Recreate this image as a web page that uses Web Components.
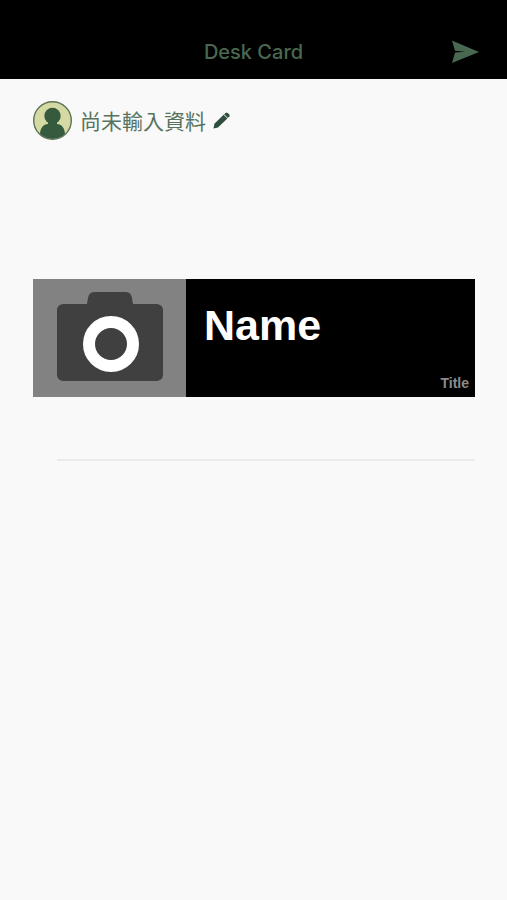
<!DOCTYPE html>
<html lang="zh-Hant">
<head>
  <meta charset="utf-8">
  <meta name="viewport" content="width=device-width, initial-scale=1">
  <title>Desk Card</title>
  <style>
    body {
      margin: 0;
      min-height: 100vh;
      background: #f9f9f9;
      font-family: Inter, "Noto Sans CJK TC", sans-serif;
      color: #56735f;
    }

    main {
      padding: 21px 32px 32px 33px;
    }

    desk-card {
      margin-top: 139px;
    }

    list-divider {
      margin: 62px 0 0 24px;
    }
  </style>
</head>
<body>
  <nav-bar>
    Desk Card
    <send-button slot="action"></send-button>
  </nav-bar>
  <main>
    <user-profile>尚未輸入資料</user-profile>
    <desk-card>
      <span slot="name">Name</span>
      <span slot="title">Title</span>
    </desk-card>
    <list-divider></list-divider>
  </main>

  <script>
    class NavBar extends HTMLElement {
      constructor() {
        super();
        this.shadowDOM = this.attachShadow({ mode: "open" });
      }

      connectedCallback() {
        this.shadowDOM.innerHTML = `
          <style>
            :host {
              display: block;
              background: #000;
              color: #486850;
            }

            header {
              display: grid;
              grid-template-columns: 1fr auto 1fr;
              align-items: center;
              height: 54px;
              padding: 25px 28px 0;
            }

            h1 {
              grid-column: 2;
              margin: 0;
              font-size: 20px;
              line-height: 24px;
              font-weight: 500;
            }

            ::slotted([slot="action"]) {
              justify-self: end;
            }
          </style>
          <header>
            <h1><slot></slot></h1>
            <slot name="action"></slot>
          </header>
        `;
      }
    }

    class SendButton extends HTMLElement {
      constructor() {
        super();
        this.shadowDOM = this.attachShadow({ mode: "open" });
      }

      connectedCallback() {
        this.shadowDOM.innerHTML = `
          <style>
            :host {
              display: block;
            }

            button {
              display: block;
              padding: 0;
              border: 0;
              background: none;
              color: inherit;
              cursor: pointer;
            }

            svg {
              display: block;
            }
          </style>
          <button type="button" aria-label="Send">
            <svg width="27" height="24" viewBox="0 0 27 24" fill="currentColor" aria-hidden="true">
              <path d="M0 0.5 L27 12 L0 23 L3 12.4 L13 11.7 L3 10.8 Z"/>
            </svg>
          </button>
        `;
      }
    }

    class UserProfile extends HTMLElement {
      constructor() {
        super();
        this.shadowDOM = this.attachShadow({ mode: "open" });
      }

      connectedCallback() {
        this.shadowDOM.innerHTML = `
          <style>
            :host {
              display: flex;
              align-items: center;
              gap: 7px;
              font-size: 21px;
              line-height: 32px;
            }

            svg {
              display: block;
            }

            .name {
              font-family: "Noto Sans CJK TC", sans-serif;
              font-weight: 400;
            }

            button {
              padding: 0;
              border: 0;
              background: none;
              color: #2f4f3c;
              cursor: pointer;
            }
          </style>
          <svg width="40" height="40" viewBox="0 0 40 40" aria-hidden="true">
            <clipPath id="face"><circle cx="19.5" cy="20.5" r="18.5"/></clipPath>
            <circle cx="19.5" cy="20.5" r="18.8" fill="#d5d9a3"/>
            <g fill="#365a3e" clip-path="url(#face)">
              <circle cx="19.5" cy="16" r="8.2"/>
              <path d="M15 20 H24 V24 C29.5 24.5 32 29 32 35 V40 H7 V35 C7 29 9.5 24.5 15 24 Z"/>
            </g>
            <circle cx="19.5" cy="20.5" r="18.8" fill="none" stroke="#5d7455" stroke-width="1.4"/>
          </svg>
          <span class="name"><slot></slot></span>
          <button type="button" aria-label="Edit">
            <svg width="17" height="17" viewBox="0 0 17 17" fill="currentColor" aria-hidden="true">
              <path d="M0.5 16.5 L1.4 11.8 L10.6 2.8 L14.4 6.5 L5 15.6 Z"/>
              <path d="M11.1 2.3 L12.6 0.9 Q13.6 0.1 14.6 0.9 L16.3 2.5 Q17 3.4 16.3 4.4 L14.9 6 Z"/>
            </svg>
          </button>
        `;
      }
    }

    class DeskCard extends HTMLElement {
      constructor() {
        super();
        this.shadowDOM = this.attachShadow({ mode: "open" });
      }

      connectedCallback() {
        this.shadowDOM.innerHTML = `
          <style>
            :host {
              display: grid;
              grid-template-columns: 153fr 289fr;
              background: #000;
              font-family: "Liberation Sans", Arial, sans-serif;
              font-weight: bold;
            }

            .photo {
              display: flex;
              justify-content: center;
              padding: 13px 0 16px;
              border: 0;
              background: #828282;
              cursor: pointer;
            }

            .info {
              display: flex;
              flex-direction: column;
              justify-content: space-between;
              padding: 22px 6px 6px 18px;
            }

            h2 {
              margin: 0;
              color: #fff;
              font-size: 43px;
              line-height: 48px;
            }

            p {
              margin: 0;
              color: #8c8c8c;
              font-size: 14px;
              line-height: 16px;
              text-align: right;
            }
          </style>
          <button class="photo" type="button" aria-label="Photo">
            <svg width="106" height="89" viewBox="0 0 106 89" aria-hidden="true">
              <path fill="#404040" d="M6 12 H30 L31 6 Q32 0 37 0 H69 Q74 0 75 6 L76 12 H100 Q106 13 106 18 V83 Q106 88 100 89 H6 Q0 88 0 83 V18 Q0 13 6 12 Z"/>
              <circle cx="54" cy="52" r="22" fill="none" stroke="#fff" stroke-width="12"/>
            </svg>
          </button>
          <div class="info">
            <h2><slot name="name"></slot></h2>
            <p><slot name="title"></slot></p>
          </div>
        `;
      }
    }

    class ListDivider extends HTMLElement {
      constructor() {
        super();
        this.shadowDOM = this.attachShadow({ mode: "open" });
      }

      connectedCallback() {
        this.shadowDOM.innerHTML = `
          <style>
            :host {
              display: block;
            }

            hr {
              margin: 0;
              border: 0;
              border-top: 2px solid #ebebeb;
            }
          </style>
          <hr>
        `;
      }
    }

    customElements.define("nav-bar", NavBar);
    customElements.define("send-button", SendButton);
    customElements.define("user-profile", UserProfile);
    customElements.define("desk-card", DeskCard);
    customElements.define("list-divider", ListDivider);
  </script>
</body>
</html>
